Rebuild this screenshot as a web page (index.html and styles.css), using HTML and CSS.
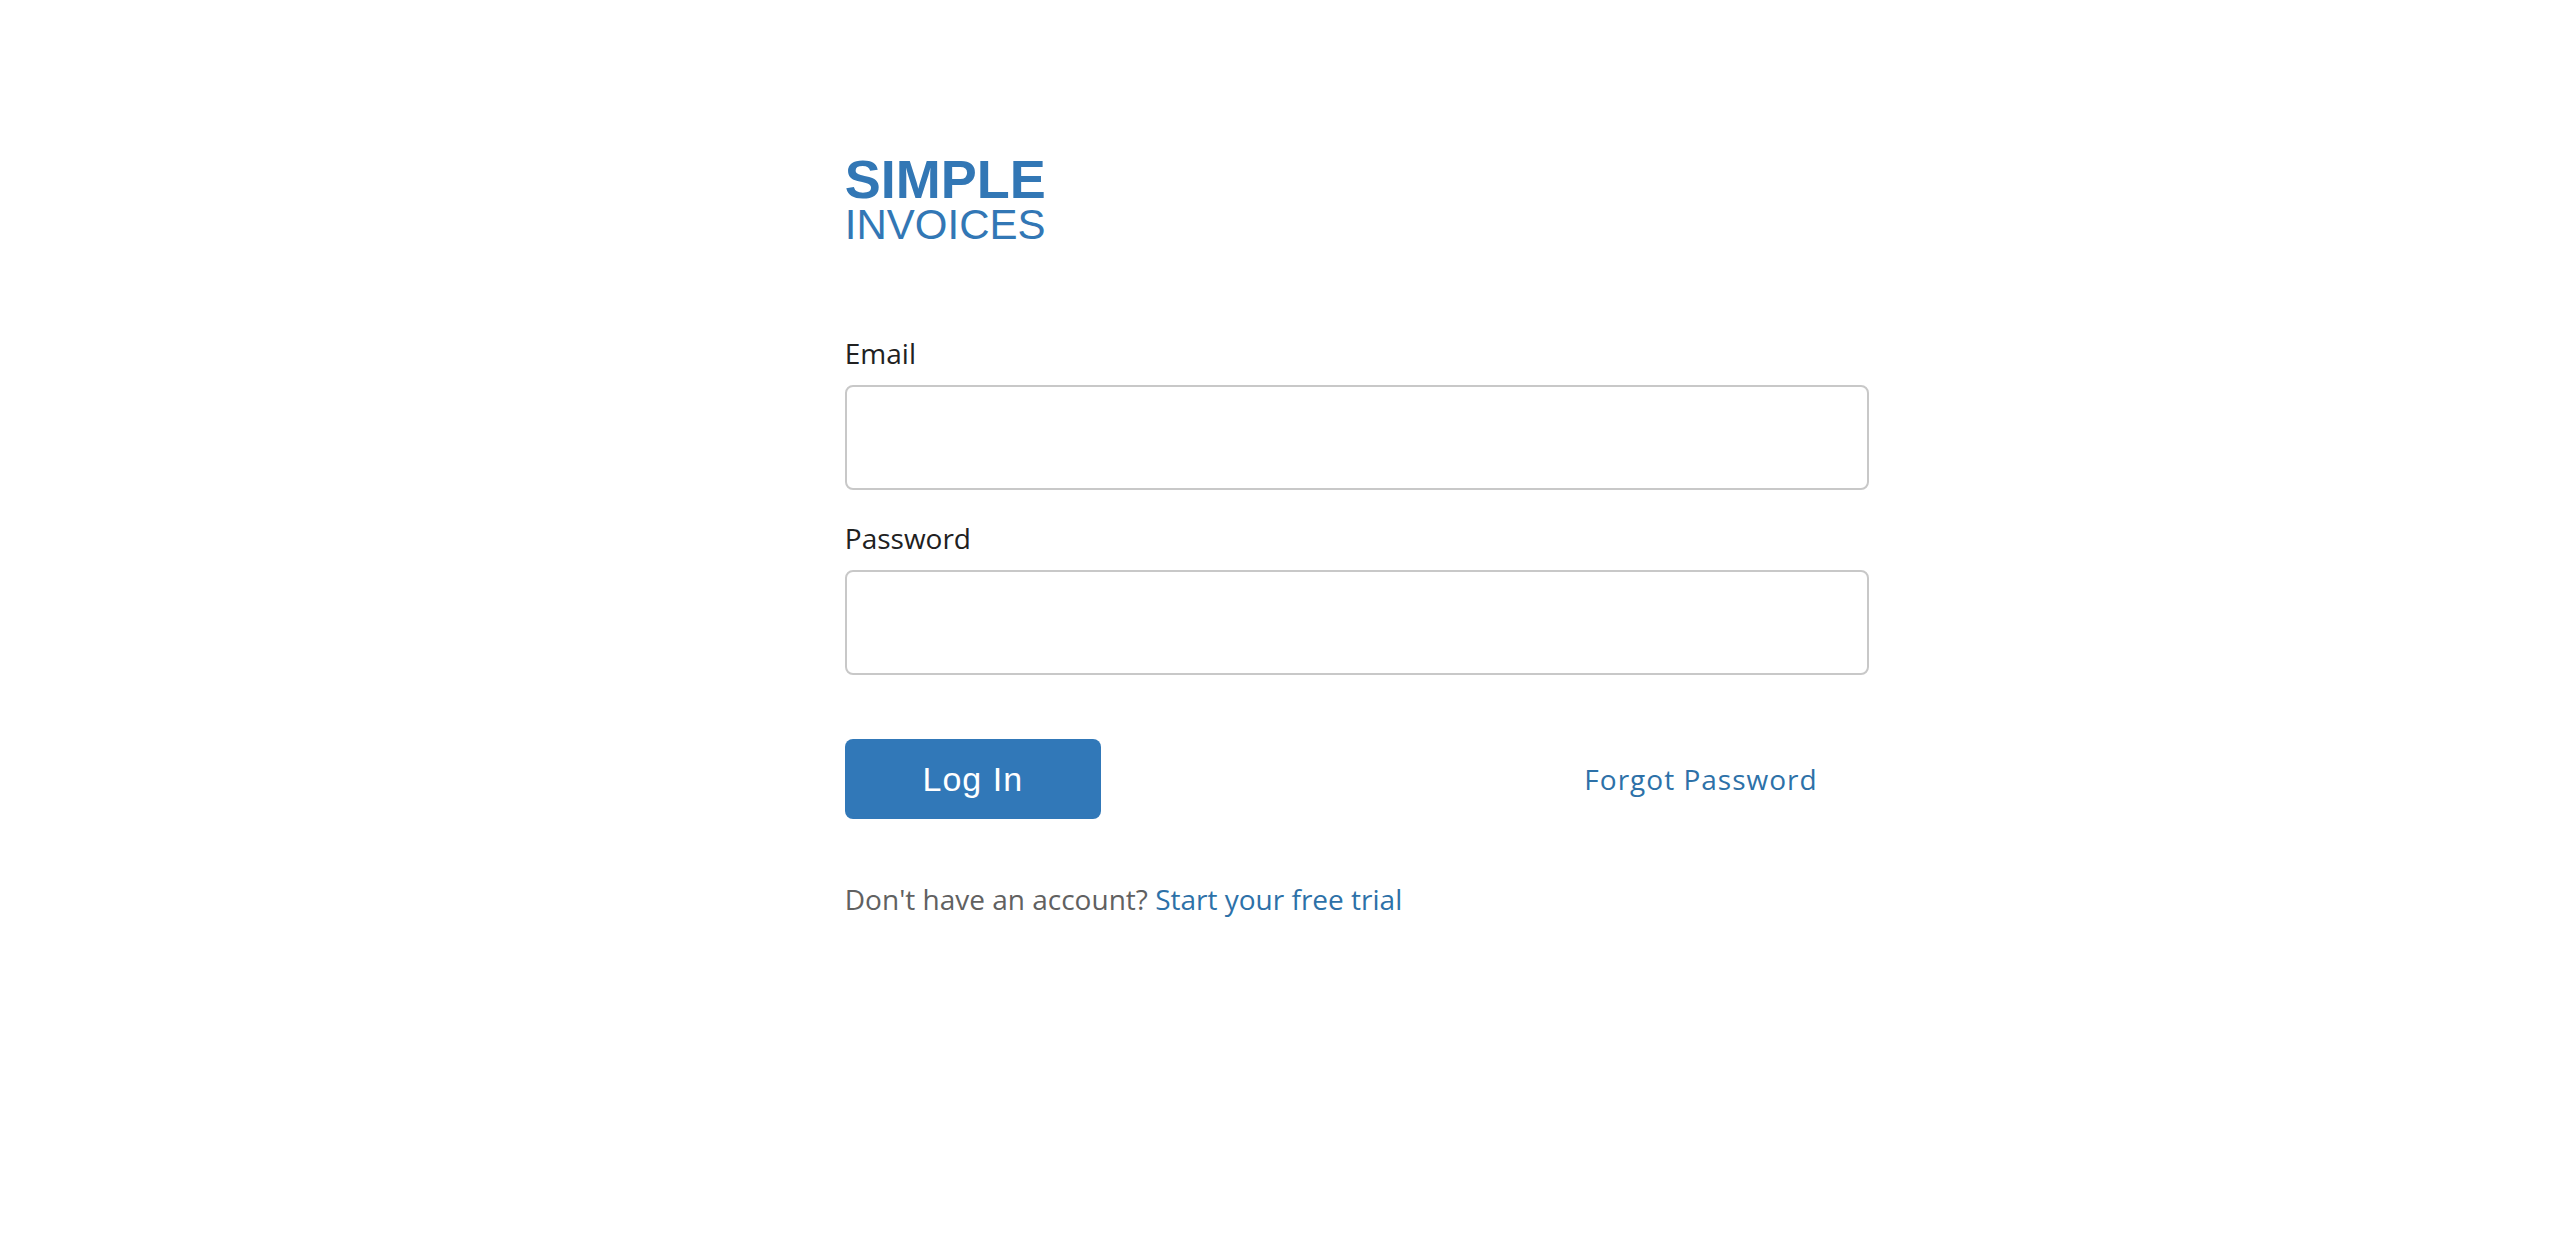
FILE: index.html
```html
<!DOCTYPE html>
<html lang="en">
<head>
  <meta charset="UTF-8">
  <meta name="viewport" content="width=device-width, initial-scale=1.0">
  <title>Simple Invoices - Log In</title>
  <link rel="stylesheet" href="styles.css">
</head>
<body>
  <main class="login">
    <h1 class="logo">
      <span class="logo-top">SIMPLE</span>
      <span class="logo-bottom">INVOICES</span>
    </h1>

    <form class="login-form">
      <div class="field">
        <label for="email">Email</label>
        <input type="email" id="email" name="email">
      </div>
      <div class="field">
        <label for="password">Password</label>
        <input type="password" id="password" name="password">
      </div>
      <div class="actions">
        <button type="submit" class="btn-login">Log In</button>
        <a href="#" class="forgot">Forgot Password</a>
      </div>
    </form>

    <p class="signup">Don't have an account? <a href="#">Start your free trial</a></p>
  </main>
</body>
</html>
```

FILE: styles.css
```css
* {
  box-sizing: border-box;
}

body {
  margin: 0;
  background: #fff;
  color: #212121;
  font-family: "Open Sans", sans-serif;
  font-size: 28px;
  line-height: 38px;
}

a {
  color: #2d71a8;
  text-decoration: none;
}

a:hover {
  text-decoration: underline;
}

.login {
  width: 40%;
  margin-left: 33%;
  padding: 158px 0 64px;
}

/* logo */
.logo {
  display: flex;
  flex-direction: column;
  margin: 0 0 84px;
  color: #3277b5;
  font-family: "Liberation Sans", Arial, sans-serif;
}

.logo-top {
  font-size: 54px;
  font-weight: bold;
  line-height: 42px;
}

.logo-bottom {
  font-size: 42px;
  font-weight: normal;
  line-height: 50px;
}

/* form */
.field {
  display: flex;
  flex-direction: column;
  gap: 13px;
  margin-bottom: 29px;
}

.field input {
  width: 100%;
  height: 105px;
  padding: 0 24px;
  border: 2px solid #c8c8c8;
  border-radius: 8px;
  background: #fff;
  color: inherit;
  font: inherit;
}

.actions {
  display: flex;
  align-items: center;
  justify-content: space-between;
  margin-top: 64px;
  padding-right: 5%;
}

.btn-login {
  width: 256px;
  height: 80px;
  border: 0;
  border-radius: 8px;
  background: #3178b8;
  color: #fff;
  font-family: "Liberation Sans", Arial, sans-serif;
  font-size: 34px;
  letter-spacing: 1px;
  cursor: pointer;
}

.forgot {
  letter-spacing: 1px;
}

.signup {
  margin: 61px 0 0;
  color: #616161;
}
```
